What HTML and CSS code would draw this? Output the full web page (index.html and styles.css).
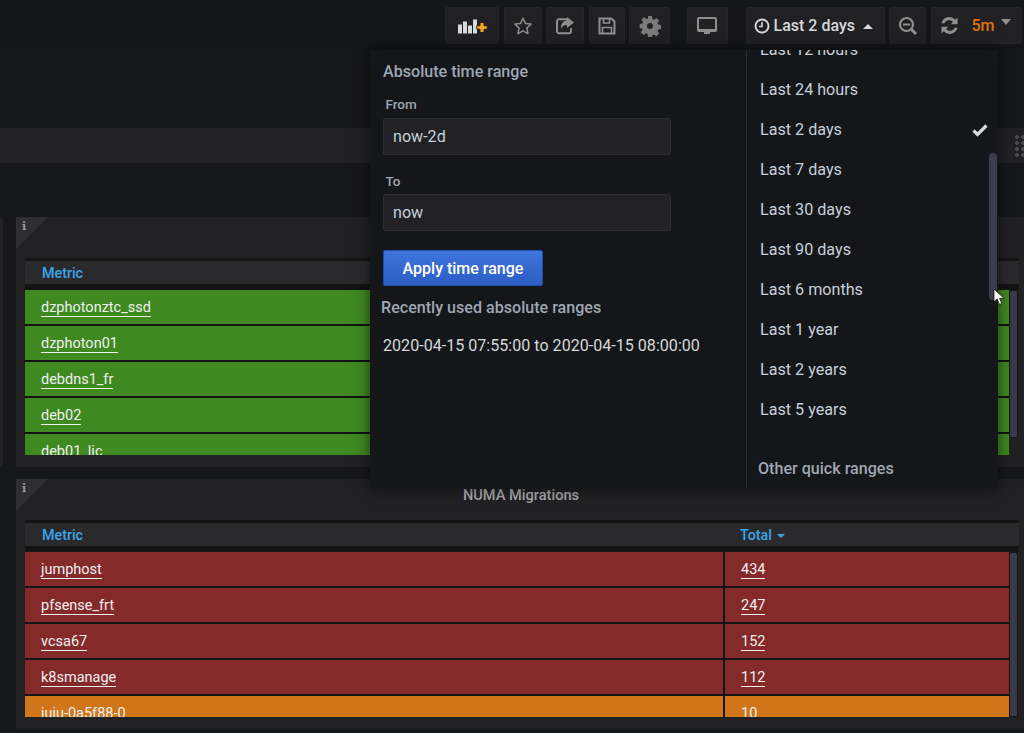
FILE: index.html
```html
<!DOCTYPE html>
<html lang="en">
<head>
<meta charset="utf-8">
<title>Dashboard</title>
<link rel="stylesheet" href="styles.css">
</head>
<body>
<header class="navbar">
  <button class="btn w-add"><svg width="32" height="20" viewBox="0 0 32 20"><g fill="#d8d9da"><rect x="2" y="8.500" width="4" height="9"/><rect x="7" y="5.500" width="4" height="12"/><rect x="12" y="9.500" width="4" height="8"/><rect x="17" y="3.500" width="4" height="14"/></g><path d="M24 6.500h4v3.200h3.200v3.600H28v3.200h-4v-3.200h-3.200V9.700H24z" fill="#f5a623" stroke="#212124" stroke-width="1"/></svg></button>
  <button class="btn w-star"><svg width="20" height="20" viewBox="0 0 20 20"><path d="M10 2.200l2.400 5.200 5.600.7-4.100 3.900 1.100 5.600L10 14.800l-5 2.800 1.100-5.600L2 8.100l5.600-.7z" fill="none" stroke="#8e8e8e" stroke-width="1.500" stroke-linejoin="round"/></svg></button>
  <button class="btn w-share"><svg width="22" height="20" viewBox="0 0 22 20"><path d="M14 3.200H5a2 2 0 0 0-2 2v10a2 2 0 0 0 2 2h10a2 2 0 0 0 2-2v-3" fill="none" stroke="#8e8e8e" stroke-width="2"/><path d="M13 1l7 5.500-7 5.500V9C10 9 8 10 7 13c-.5-5 2-8 6-8.500z" fill="#8e8e8e"/></svg></button>
  <button class="btn w-save"><svg width="18" height="20" viewBox="0 0 18 20"><path d="M1.500 2.500h12l3 3v12h-15z" fill="none" stroke="#8e8e8e" stroke-width="2"/><path d="M5.500 3v4h6V3M4.500 17v-5.500h9V17" fill="none" stroke="#8e8e8e" stroke-width="1.600"/></svg></button>
  <button class="btn w-gear"><svg width="22" height="22" viewBox="0 0 20 20"><path fill="#7b7b7b" fill-rule="evenodd" d="M8 0h4l.5 3 1.500.6 2.500-1.800 2.800 2.800-1.800 2.500.6 1.500 2.900.4v4l-2.900.5-.6 1.500 1.800 2.500-2.800 2.800-2.500-1.800-1.500.6L12 21H8l-.5-3-1.500-.6-2.500 1.800-2.800-2.800 1.800-2.500-.6-1.500L-.5 12V8l2.900-.4.6-1.500-1.800-2.500 2.800-2.800L6.500 3 8 2.400zM10 7a3 3 0 1 0 0 6 3 3 0 0 0 0-6z" transform="translate(1 1) scale(.9)"/></svg></button>
  <button class="btn w-tv gap-left"><svg width="22" height="20" viewBox="0 0 22 20"><path d="M3 1h16a2 2 0 0 1 2 2v11a2 2 0 0 1-2 2h-5v2H8v-2H3a2 2 0 0 1-2-2V3a2 2 0 0 1 2-2zm0 2v10h16V3z" fill="#8e8e8e"/></svg></button>
  <button class="btn w-range gap-left"><svg width="16" height="16" viewBox="0 0 16 16"><circle cx="8" cy="8" r="6.500" fill="none" stroke="#d8d9da" stroke-width="1.900"/><path d="M8 4v4.500H5" fill="none" stroke="#d8d9da" stroke-width="1.600"/></svg><span class="range-label">Last 2 days</span><span class="caret-up"></span></button>
  <button class="btn w-zoom"><svg width="20" height="20" viewBox="0 0 20 20"><circle cx="8.500" cy="8.500" r="6.500" fill="none" stroke="#8e8e8e" stroke-width="2.200"/><path d="M13 13l5 5" stroke="#8e8e8e" stroke-width="3"/><path d="M5 8.500h7" stroke="#8e8e8e" stroke-width="2"/></svg></button>
  <div class="btn w-refresh">
    <svg width="23" height="23" viewBox="0 0 20 20"><path d="M3 8a7 7 0 0 1 12-3l2-2v6h-6l2-2a4.500 4.500 0 0 0-7.500 1zM17 12a7 7 0 0 1-12 3l-2 2v-6h6l-2 2a4.500 4.500 0 0 0 7.500-1z" fill="#8e8e8e"/></svg>
    <span class="interval">5m</span><span class="caret-down"></span>
  </div>
</header>

<div class="row-band">
  <span class="drag-dots"></span>
</div>

<main class="panels">
  <div class="stub"></div>
  <div class="panel-stack">
    <section class="panel">
      <span class="corner"></span><span class="corner-i">i</span>
      <h2 class="panel-title"></h2>
      <div class="thead"><span class="th-metric">Metric</span><span class="th-total"></span></div>
      <div class="tbody">
        <div class="tr green"><span class="td-m"><a>dzphotonztc_ssd</a></span><span class="td-t"></span></div>
        <div class="tr green"><span class="td-m"><a>dzphoton01</a></span><span class="td-t"></span></div>
        <div class="tr green"><span class="td-m"><a>debdns1_fr</a></span><span class="td-t"></span></div>
        <div class="tr green"><span class="td-m"><a>deb02</a></span><span class="td-t"></span></div>
        <div class="tr green"><span class="td-m"><a>deb01_lic</a></span><span class="td-t"></span></div>
        <span class="scroll-thumb short"></span>
      </div>
    </section>
    <section class="panel">
      <span class="corner"></span><span class="corner-i">i</span>
      <h2 class="panel-title">NUMA Migrations</h2>
      <div class="thead"><span class="th-metric">Metric</span><span class="th-total">Total <span class="sort-caret"></span></span></div>
      <div class="tbody">
        <div class="tr red"><span class="td-m"><a>jumphost</a></span><span class="td-t"><a>434</a></span></div>
        <div class="tr red"><span class="td-m"><a>pfsense_frt</a></span><span class="td-t"><a>247</a></span></div>
        <div class="tr red"><span class="td-m"><a>vcsa67</a></span><span class="td-t"><a>152</a></span></div>
        <div class="tr red"><span class="td-m"><a>k8smanage</a></span><span class="td-t"><a>112</a></span></div>
        <div class="tr orange"><span class="td-m"><a>juju-0a5f88-0</a></span><span class="td-t"><a>10</a></span></div>
        <span class="scroll-thumb"></span>
      </div>
    </section>
  </div>
</main>

<div class="popover">
  <div class="pop-left">
    <h3 class="pop-h">Absolute time range</h3>
    <label class="pop-label">From</label>
    <div class="pop-input">now-2d</div>
    <label class="pop-label to">To</label>
    <div class="pop-input">now</div>
    <button class="apply">Apply time range</button>
    <h3 class="pop-h recent">Recently used absolute ranges</h3>
    <div class="recent-item">2020-04-15 07:55:00 to 2020-04-15 08:00:00</div>
  </div>
  <div class="pop-right">
    <ul class="quick">
      <li>Last 12 hours</li>
      <li>Last 24 hours</li>
      <li>Last 2 days<svg class="check" width="16" height="14" viewBox="0 0 16 14"><path d="M1.500 7.500l4 4 9-9" fill="none" stroke="#d8d9da" stroke-width="3.200"/></svg></li>
      <li>Last 7 days</li>
      <li>Last 30 days</li>
      <li>Last 90 days</li>
      <li>Last 6 months</li>
      <li>Last 1 year</li>
      <li>Last 2 years</li>
      <li>Last 5 years</li>
    </ul>
    <h3 class="pop-h other">Other quick ranges</h3>
    <span class="pop-thumb"></span>
  </div>
</div>
<svg class="cursor" width="12" height="18" viewBox="0 0 12 18"><path d="M1 1v13l3.200-3 2.300 5.500 2.300-1L6.500 10.300H11z" fill="#fff" stroke="#111" stroke-width=".8"/></svg>
</body>
</html>
```
FILE: styles.css
```css
* { box-sizing: border-box; }
html, body { margin: 0; height: 733px; overflow: hidden; }
body { background: #161719; color: #d8d9da; font-family: Roboto, "Liberation Sans", sans-serif; font-size: 14px; position: relative; }
button { font-family: inherit; padding: 0; }

.navbar { display: flex; justify-content: flex-start; align-items: center; gap: 4.500px; height: 50px; padding: 1px 0 0 445px; background: #141619; }
.btn { height: 37px; display: flex; align-items: center; justify-content: center; background: #212124; border: 1px solid #252528; border-radius: 2px; color: #d8d9da; flex: none; }
.w-add { width: 54px; } .w-star { width: 38px; } .w-share { width: 38px; } .w-save { width: 36px; } .w-gear { width: 41px; }
.w-tv { width: 41px; } .w-range { width: 138.500px; justify-content: flex-start; padding-left: 7px; }
.w-zoom { width: 37px; } .w-refresh { width: 91px; justify-content: flex-start; padding-left: 6.500px; }
.gap-left { margin-left: 12px; }
.w-range.gap-left { margin-left: 14px; }
.range-label { font-size: 16px; font-weight: 500; margin-left: 3.500px; }
.caret-up { width: 0; height: 0; margin-left: 8px; margin-top: 2px; border: 5px solid transparent; border-top: 0; border-bottom: 5px solid #d8d9da; }
.interval { font-size: 16px; font-weight: 500; color: #e0700f; margin-left: 10.500px; }
.caret-down { width: 0; height: 0; margin-left: 6px; margin-bottom: 7px; border: 5.500px solid transparent; border-bottom: 0; border-top: 6px solid #8e8e8e; }

.row-band { height: 35px; margin-top: 78px; background: #212124; position: relative; }
.drag-dots { position: absolute; left: 1014px; top: 6px; width: 10px; height: 24px;
  background-image: radial-gradient(circle, #4a4a4d 1.800px, transparent 2.100px); background-size: 6px 6px; }

.panels { display: flex; margin-top: 54px; gap: 13px; }
.stub { width: 3px; height: 250px; background: #212124; }
.panel-stack { flex: 1; display: flex; flex-direction: column; gap: 12px; }
.panel { position: relative; height: 250px; background: #212124; padding: 0 0 0 9px; }
.corner { position: absolute; left: 0; top: 0; border-style: solid; border-width: 32px 32px 0 0; border-color: #2f2f33 transparent transparent transparent; }
.corner-i { position: absolute; left: 6px; top: 3px; font-size: 11px; font-weight: 900; color: #9a9a9a; font-family: "DejaVu Serif", serif; }
.panel-title { margin: 0; height: 41px; padding: 7px 7px 0 0; font-size: 14.600px; line-height: 18px; font-weight: 500; color: #a8a8aa; text-align: center; }
.thead { height: 32px; display: flex; align-items: center; background: #2a2a2d; border-top: 3px solid #141414; border-bottom: 6px solid #141414; width: 994px; font-weight: 500; color: #3ba5ea; font-size: 14.300px; }
.th-metric { width: 700px; padding-left: 17px; }
.th-total { padding-left: 15px; }
.sort-caret { display: inline-block; vertical-align: middle; margin-left: 1px; border: 4.500px solid transparent; border-bottom: 0; border-top: 4.500px solid #3ba5ea; }
.tbody { position: relative; height: 165px; overflow: hidden; width: 994px; }
.tr { height: 36px; width: 984px; display: flex; border-bottom: 2px solid #141414; }
.td-m { width: 700px; padding: 9px 0 0 16px; border-right: 2px solid #141414; }
.td-t { padding: 9px 0 0 16px; flex: 1; }
.tr a { color: #f0f0f0; font-size: 14.500px; border-bottom: 1px solid #f0f0f0; line-height: 17px; display: inline-block; }
.green { background: #3f8a20; }
.red { background: #842a2b; }
.orange { background: #d0751a; }
.scroll-thumb { position: absolute; right: 1px; top: 0; bottom: 0; width: 9px; background: #3a3a4a; border: 1px solid #141414; border-radius: 2px; }
.scroll-thumb.short { bottom: 17px; }

.popover { position: absolute; left: 370px; top: 50px; width: 628px; height: 438px; background: #141619; display: flex; overflow: hidden; box-shadow: 0 0 14px rgba(0,0,0,.6); }
.pop-left { width: 377px; padding: 12px 0 0 13px; border-right: 1px solid #2c2d30; }
.pop-h { margin: 0; font-size: 16.100px; line-height: 20px; font-weight: 500; color: #9fa7b3; }
.pop-label { display: block; margin: 13px 0 0 2.500px; font-size: 13.500px; line-height: 18px; font-weight: 500; color: #9fa7b3; height: 23px; }
.pop-label.to { margin-top: 17px; height: 22px; }
.pop-input { width: 288px; height: 37px; background: #212126; border: 1px solid #2c2d33; border-radius: 2px; padding-left: 9px; font-size: 16.100px; line-height: 36px; color: #c7d0d9; }
.apply { display: block; margin-top: 19px; width: 160px; height: 36px; border: 1px solid #1f4ea8; border-radius: 2px; background: linear-gradient(#3f75dd, #2c5ec4); color: #fff; font-size: 16px; font-weight: 500; }
.recent { margin: 12px 0 0 -2px; }
.recent-item { margin-top: 18px; font-size: 16.100px; line-height: 20px; color: #d8d9da; }
.pop-right { flex: 1; position: relative; padding-left: 13px; overflow: hidden; }
.quick { list-style: none; margin: -20px 0 0; padding: 0; }
.quick li { height: 40px; line-height: 40px; font-size: 16.150px; color: #c7d0d9; position: relative; }
.check { position: absolute; left: 212px; top: 13px; }
.other { margin: 29px 0 0 -2px; }
.pop-thumb { position: absolute; left: 242px; top: 103px; width: 8px; height: 147px; background: #3c3d4b; border-radius: 4px; }
.cursor { position: absolute; left: 993px; top: 288px; }
```
